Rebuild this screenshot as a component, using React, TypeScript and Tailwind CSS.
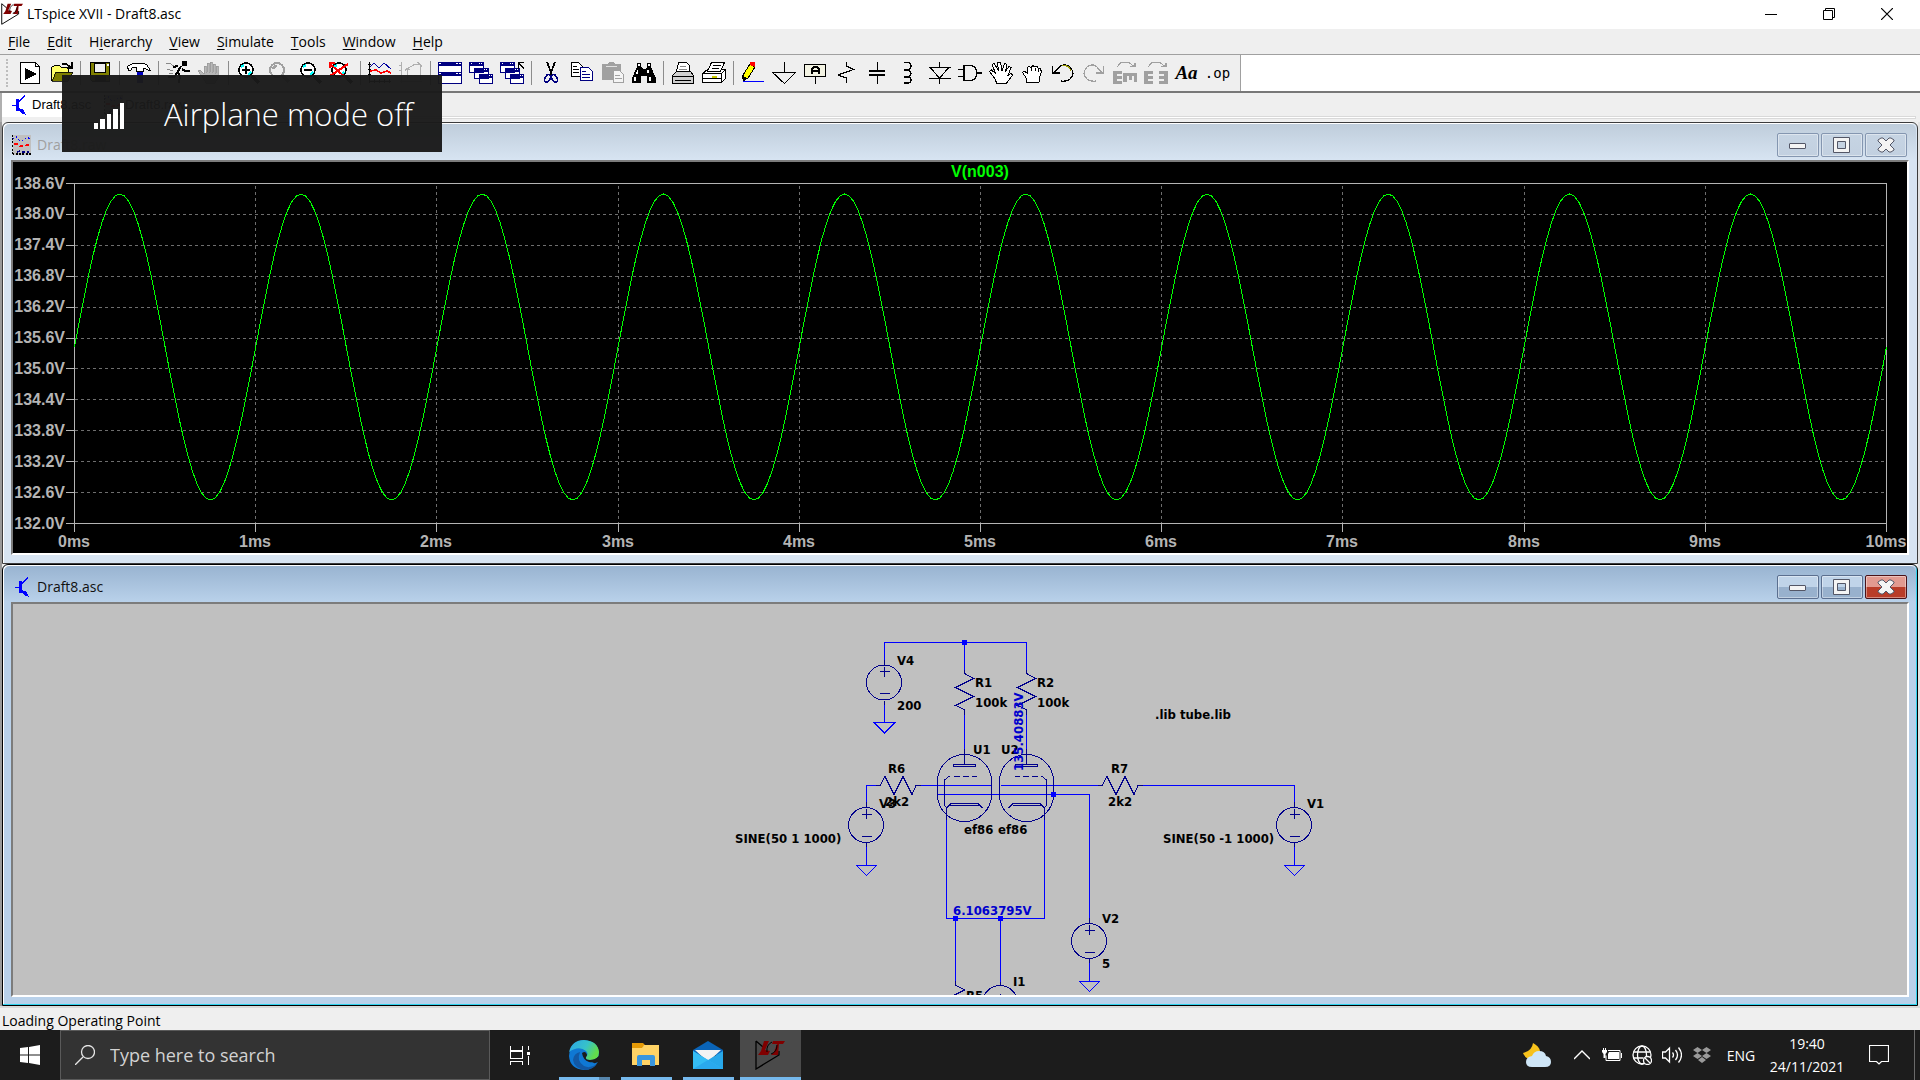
import type { ReactNode } from 'react';

const UI_FONT = "font-['Open_Sans','Noto_Sans',sans-serif]";

/* ------------------------------------------------------------------ */
/* Shared glyphs                                                       */
/* ------------------------------------------------------------------ */

function LtLogo({ className }: { className: string }) {
  return (
    <svg aria-hidden="true" className={className} viewBox="0 0 30 30">
      <path d="M1 1v28l23-14V11M1 1l7 6" fill="none" stroke="#000" strokeWidth="1.300" />
      <path d="M9 1h5l-4 9 5 1-2 4H3l3-4zM18 1h12l-2 3h-4l-1 11h-7l3-3 3-8h-5z" fill="#800000" />
      <path d="M12 12q-1-7 5-10M16 14q6-2 6-9" fill="none" stroke="#000" strokeWidth="1" />
    </svg>
  );
}

function TransistorIcon() {
  return (
    <svg aria-hidden="true" className="size-5" shapeRendering="crispEdges" viewBox="0 0 20 20">
      <path d="M4 10.500h4" stroke="#00f" strokeWidth="1" />
      <path d="M8 4h3v12H8z" fill="#00f" />
      <path d="M10 7l7-6M10 13l6 6" fill="none" stroke="#00f" strokeWidth="1.500" />
      <path d="M13 14h2l3 6-5-2z" fill="#00f" />
    </svg>
  );
}

function WaveIcon() {
  return (
    <svg aria-hidden="true" className="size-5" shapeRendering="crispEdges" viewBox="0 0 20 20">
      <path d="M2 0h18v20H2z" fill="#c0c0c0" />
      <path d="M1 1h1M1 4h1M1 7h1M1 11h1M1 15h1M1 18h1M2 19h1M6 18v2M9 18v2M12 18v2M16 18v2M19 18v2" stroke="#000" strokeWidth="1.500" />
      <path d="M2 4l3-3 3 4 4 1 4-4 4 3" fill="none" stroke="#00f" strokeDasharray="2 2" />
      <path d="M3 9h3l3 2h5l2-1h4" fill="none" stroke="#f00" strokeDasharray="4 2" strokeWidth="1.500" />
      <path d="M6 17l3-1 3 1h6" fill="none" stroke="#000080" strokeDasharray="3 2" strokeWidth="1.500" />
    </svg>
  );
}

/* ------------------------------------------------------------------ */
/* Toolbar                                                             */
/* ------------------------------------------------------------------ */

type Tool = { label: string; icon: ReactNode };

const magnifier = (
  <>
    <circle cx="10" cy="9" fill="#fff" r="7" stroke="#000" strokeWidth="1.600" />
    <path d="M5 6l3-2M12 14l3-3" stroke="#0ff" strokeWidth="2" />
    <path d="M16 15l7 7" stroke="#000" strokeWidth="3" />
  </>
);

const cascade = (
  <>
    <path d="M.5 1.500h14v10H.5zM5.500 7.500h14v10h-14zM10.500 13.500h13v9h-13z" fill="#fff" stroke="#000080" />
    <path d="M0 1h15v4H0zM5 7h15v4H5zM10 13h14v4H10z" fill="#000080" />
    <path d="M2 2h1v1H2zM10 2h1v1h-1zM12 2h1v1h-1zM15 8h1v1h-1zM17 8h1v1h-1zM20 14h1v1h-1zM22 14h1v1h-1z" fill="#fff" />
  </>
);

const toolGroups: Tool[][] = [
  [
    {
      label: 'New schematic',
      icon: (
        <>
          <path d="M2.500 1.500h15l4 4v17h-19z" fill="#fff" stroke="#000" />
          <path d="M17.500 1.500v4h4" fill="none" stroke="#000" />
          <path d="M7 7l12 6-12 6z" fill="#000" />
        </>
      ),
    },
    {
      label: 'Open',
      icon: (
        <>
          <path d="M2.500 19.500v-13l3-2h5l2 2h7v4" fill="#ff6" stroke="#000" />
          <path d="M3 20l4-9h17l-5 9z" fill="#808000" stroke="#000" strokeWidth=".8" />
          <path d="M13 3h4l3 2 2 1M23 1v6h-5" fill="none" stroke="#000" strokeWidth="1.500" />
        </>
      ),
    },
  ],
  [
    {
      label: 'Save',
      icon: (
        <>
          <path d="M2.500 1.500h19v19h-17l-2-2z" fill="#808000" stroke="#000" />
          <path d="M6.500 2h11v9h-11z" fill="#efefef" stroke="#000" />
          <path d="M7 14h11v6H7z" fill="#000" />
          <path d="M18.500 3h2v2h-2z" fill="#fff" />
        </>
      ),
    },
  ],
  [
    {
      label: 'Control panel',
      icon: (
        <>
          <path d="M9.500 11h6v11h-6z" fill="#0000c0" />
          <path d="M.5 5.500l5-3h11l3 1 4 6h-2l-3-2h-2v3h-7v-4h-4l-2 3h-2z" fill="#fff" stroke="#000" />
        </>
      ),
    },
  ],
  [
    {
      label: 'Run',
      icon: (
        <>
          <path d="M16 0h5v5h-5z" fill="#000" />
          <path d="M15 5l-4 7M12 5l-5 1M16 8l3 2h5M12 11l2 4-1 7M11 12l-3 4H2" fill="none" stroke="#000" strokeWidth="2" />
          <path d="M0 3l3-1 5 3M1 8l6 2M3 12h4" fill="none" stroke="#888" />
        </>
      ),
    },
    {
      label: 'Halt',
      icon: (
        <path
          d="M5 15l-4-5 2-1 4 4V5h2v6h1V2h2v9h1V1h2v10h1V3h2v9h1V5h2v12l-3 5H9z"
          fill="#b8b8b8"
          stroke="#999"
          strokeWidth=".8"
        />
      ),
    },
  ],
  [
    { label: 'Zoom in', icon: <>{magnifier}<path d="M6 9h8M10 5v8" stroke="#000" strokeWidth="2" /></> },
    {
      label: 'Pan',
      icon: (
        <>
          <circle cx="10" cy="9" fill="none" r="7" stroke="#a0a0a0" strokeWidth="2" />
          <path d="M6 8l3-4M15 14l7 7" stroke="#a0a0a0" strokeWidth="3" />
        </>
      ),
    },
    { label: 'Zoom out', icon: <>{magnifier}<path d="M6 9h8" stroke="#000" strokeWidth="2" /></> },
    { label: 'Zoom fit', icon: <>{magnifier}<path d="M0 2l17 15M19 3L1 15M1 2v5M1 2h5" fill="none" stroke="#f00" strokeWidth="2" /></> },
  ],
  [
    {
      label: 'Autorange',
      icon: (
        <>
          <path d="M1.500 1v21M0 3.500h3M0 8.500h3M0 13.500h3M1 20.500h22M6 18v4M11 18v4M16 18v4M21 18v4" fill="none" stroke="#000" />
          <path d="M2 6l4-4 5 5 5-5 7 6" fill="none" stroke="#0000a0" />
          <path d="M2 10l6-1 5 3 6-2 4 2" fill="none" stroke="#f00" strokeWidth="1.500" />
        </>
      ),
    },
    {
      label: 'Toggle axis',
      icon: (
        <path
          d="M2.500 1v21M0 4.500h3M0 9.500h3M0 14.500h3M1 20.500h22M8 18V8l8-5h5v16M6 10l2-3 3 2M18 1l3 2 2 3M10 14h3M15 14h3"
          fill="none"
          stroke="#b0b0b0"
        />
      ),
    },
  ],
  [
    {
      label: 'Tile windows',
      icon: (
        <>
          <path d="M.5 1.500h23v21H.5z" fill="#fff" stroke="#000080" />
          <path d="M0 1h24v4H0zM0 11h24v4H0z" fill="#000080" />
          <path d="M1 2h2v1H1zM18 2h2v1h-2zM21 2h2v1h-2zM1 12h2v1H1zM18 12h2v1h-2zM21 12h2v1h-2z" fill="#fff" />
        </>
      ),
    },
    { label: 'Cascade windows', icon: cascade },
    { label: 'Close all', icon: <>{cascade}<path d="M24 8l-5-6M18.500 8V1.500H24" fill="none" stroke="#000" strokeWidth="1.500" /></> },
  ],
  [
    {
      label: 'Cut',
      icon: (
        <>
          <path d="M8 1l5 13M16 1l-5 13" stroke="#000" strokeWidth="1.800" />
          <ellipse cx="8.500" cy="17.500" fill="none" rx="2.500" ry="4" stroke="#000080" strokeWidth="1.600" transform="rotate(25 8.500 17.500)" />
          <ellipse cx="15.500" cy="17.500" fill="none" rx="2.500" ry="4" stroke="#000080" strokeWidth="1.600" transform="rotate(-25 15.500 17.500)" />
        </>
      ),
    },
    {
      label: 'Copy',
      icon: (
        <>
          <path d="M1.500 1.500h7l4 4v10h-11z" fill="#fff" stroke="#000" />
          <path d="M3 5.500h4M3 8.500h6M3 11.500h6" stroke="#000" />
          <path d="M10.500 6.500h8l4 4v9h-12z" fill="#fff" stroke="#000080" />
          <path d="M12 10.500h4M12 13.500h8M12 16.500h8" stroke="#000080" />
        </>
      ),
    },
    {
      label: 'Paste',
      icon: (
        <>
          <path d="M1 3h6l1-2h5l1 2h6v16H1z" fill="#a0a0a0" />
          <path d="M5 5.500h11" stroke="#e0e0e0" />
          <path d="M12.500 9.500h6l4 4v8h-10z" fill="#f4f4f4" stroke="#a0a0a0" />
          <path d="M14 14.500h5M14 17.500h7" stroke="#a0a0a0" />
        </>
      ),
    },
    {
      label: 'Find',
      icon: (
        <>
          <path d="M5 2h4v4l2 2h2l2-2V2h4v4l5 11v5h-9v-7h-6v7H0v-5L5 6z" fill="#000" />
          <path d="M6 3h2v2H6zM16 3h2v2h-2zM5 9h1v4H4zM15 9h2v3h-2zM2 16h2v4H2zM17 16h2v4h-2z" fill="#fff" />
        </>
      ),
    },
  ],
  [
    {
      label: 'Print',
      icon: (
        <>
          <path d="M5.500 10.500l2-9h8l3 3v6" fill="#fff" stroke="#000" />
          <path d="M1.500 14.500l4-4h14l3 4v8h-21z" fill="#d0d0d0" stroke="#000" />
          <path d="M2 15.500h20M4 19.500h16" stroke="#000" />
          <path d="M9 5.500h6M8 8.500h8" stroke="#888" />
        </>
      ),
    },
    {
      label: 'Print preview',
      icon: (
        <>
          <path d="M.5 12.500l5-4h18l-4 4zM.5 12.500h19v9H.5zM19.500 12.500l4-4v9l-4 4z" fill="#fff" stroke="#000" />
          <path d="M5.500 10l4-8.500h13l-4 8.500z" fill="#fff" stroke="#000" />
          <path d="M11 4.500h8M10 7.500h7M1 17.500h18" stroke="#000" />
          <path d="M10 15.500h5" stroke="#cc0" strokeWidth="2" />
        </>
      ),
    },
  ],
  [
    {
      label: 'Wire',
      icon: (
        <>
          <path d="M2 19V14L9 3l5 3-7 11z" fill="#ff0" stroke="#000" />
          <path d="M9 1h5v5l-5-2z" fill="#f00" />
          <path d="M1 14l5 3-4 4z" fill="#000" />
          <path d="M2 20.500h21" stroke="#00f" />
        </>
      ),
    },
    { label: 'Ground', icon: <path d="M12.500 1v10.500M.5 11.500h23l-11 11z" fill="none" stroke="#000" strokeWidth="1.200" /> },
    {
      label: 'Label net',
      icon: (
        <>
          <rect fill="#f4f4e4" height="12" rx="1" stroke="#000" strokeWidth="1.500" width="21" x="1.500" y="3.500" />
          <path d="M12.500 16v7" stroke="#000" />
          <path d="M9 13V8l2-2h3l2 2v5M9 10h6" fill="none" stroke="#000" strokeWidth="1.500" />
        </>
      ),
    },
    { label: 'Resistor', icon: <path d="M12.500 1v4l7 3.500L4 14l8.500 3v5" fill="none" stroke="#000" strokeWidth="1.200" /> },
    { label: 'Capacitor', icon: <><path d="M12.500 1v8M12.500 15v8" stroke="#000" /><path d="M4 10h16M4 14h16" stroke="#000" strokeWidth="2" /></> },
    { label: 'Inductor', icon: <path d="M8 1.500h3q4 0 4 3.500t-4 4q4 1 4 3.500t-4 3.500q4 0 4 3t-4 3H8M8 9h3M8 16h3" fill="none" stroke="#000" strokeWidth="1.400" /> },
    { label: 'Diode', icon: <path d="M12.500 1v5M12.500 17v6M2 6.500h22M2 17.500h22M3 6.500L12.500 17 22 6.500" fill="none" stroke="#000" strokeWidth="1.200" /> },
    { label: 'Component', icon: <path d="M0 8.500h6M0 15.500h6M6 4.500h6q6 0 7 7.500-1 7.500-7 7.500H6zM19 12h5" fill="none" stroke="#000" strokeWidth="1.300" /> },
    {
      label: 'Move',
      icon: (
        <path
          d="M7.500 22.500l-1-4-6-8 2-1.500 4.500 4-4-9 2-1.500 4.500 7-1-8h3l1.500 8 2.500-7 2.500 1-1.500 7 3.500-5 2 1-3 8 3-2 1.500 1.500-5 7-2 2z"
          fill="#fff"
          stroke="#000"
        />
      ),
    },
    {
      label: 'Drag',
      icon: (
        <path
          d="M6.500 21.500v-4l-4-6 1.500-1.500 3 2V7l2-1.500 2 1 2-2 2 1.500 2-.500 1.500 2 2 .5 1 3-2 5v5zM11.500 7v3M15 7v3M18 8v3"
          fill="#fff"
          stroke="#000"
        />
      ),
    },
    { label: 'Undo', icon: <><path d="M6 8q7-7 13-2 6 7 0 12-4 3-9 2" fill="none" stroke="#000" strokeWidth="1.300" /><path d="M11 4.500q6-1 9 5" fill="none" stroke="#990" strokeWidth="1.300" /><path d="M1.500 5v7H9M2 12l6-5" fill="none" stroke="#000" strokeWidth="1.600" /></> },
    { label: 'Redo', icon: <><path d="M17 8Q11 1 5 6q-6 7 0 12 4 3 9 2" fill="none" stroke="#a0a0a0" strokeWidth="1.300" /><path d="M21.500 5v7H14M21 12l-6-5" fill="none" stroke="#a0a0a0" strokeWidth="1.600" /></> },
    { label: 'Rotate', icon: <><path d="M4 6l4-4.500h8l5 4M17 5.500h5v-4" fill="none" stroke="#a0a0a0" strokeWidth="1.200" /><path d="M0 10h9v3H4v2h5v3H4v2h5v3H0zM10 12h14v9h-3v-6h-2v4h-3v-4h-2v6h-4z" fill="#a0a0a0" /></> },
    { label: 'Mirror', icon: <><path d="M4 6l4-4.500h8l5 4M17 5.500h5v-4" fill="none" stroke="#a0a0a0" strokeWidth="1.200" /><path d="M0 10h9v3H4v2h5v3H4v2h5v3H0zM24 10h-9v3h5v2h-5v3h5v2h-5v3h9z" fill="#a0a0a0" /></> },
  ],
];

function Toolbar() {
  return (
    <div className="flex h-[38px] border-b-2 border-[#787878] bg-white">
      <div className="flex items-center border-r border-[#a0a0a0] bg-[#efefef] pr-[7px]">
        <span className="mr-[5px] ml-[6px] h-7 w-[3px] border-l-2 border-dotted border-[#bdbdbd]" />
        {toolGroups.map((group, index) => (
          <div className="flex items-center" key={group[0].label}>
            {index > 0 && <span className="mx-[3px] h-6 w-[2px] border-r border-[#8c8c8c]" />}
            {group.map((tool) => (
              <button aria-label={tool.label} className="flex h-8 w-[31px] items-center justify-center" key={tool.label} type="button">
                <svg aria-hidden="true" className="size-6" shapeRendering="crispEdges" viewBox="0 0 24 24">
                  {tool.icon}
                </svg>
              </button>
            ))}
          </div>
        ))}
        <button className="h-8 w-[31px] font-['Liberation_Serif',serif] text-[19px] leading-8 font-bold text-black italic" type="button">
          Aa
        </button>
        <button className="h-8 w-[31px] font-['DejaVu_Sans_Mono',monospace] text-[14px] leading-6 text-black" type="button">
          .op
        </button>
      </div>
    </div>
  );
}

/* ------------------------------------------------------------------ */
/* Main window header                                                  */
/* ------------------------------------------------------------------ */

const menus = [
  ['', 'F', 'ile'],
  ['', 'E', 'dit'],
  ['H', 'i', 'erarchy'],
  ['', 'V', 'iew'],
  ['', 'S', 'imulate'],
  ['', 'T', 'ools'],
  ['', 'W', 'indow'],
  ['', 'H', 'elp'],
];

function TitleBar() {
  return (
    <header className="flex h-[29px] items-center bg-white pb-px pl-[1px]">
      <LtLogo className="size-[22px]" />
      <h1 className="ml-1 flex-1 text-[14px] leading-5 text-black">LTspice XVII - Draft8.asc</h1>
      <button aria-label="Minimize" className="flex h-full w-[58px] items-center justify-center" type="button">
        <span className="h-px w-3 bg-black" />
      </button>
      <button aria-label="Restore" className="flex h-full w-[58px] items-center justify-center" type="button">
        <svg aria-hidden="true" className="size-3" viewBox="0 0 12 12">
          <path d="M.5 2.500h9v9h-9zM2.500 2.500v-2h9v9h-2" fill="none" stroke="#000" />
        </svg>
      </button>
      <button aria-label="Close" className="mr-1 flex h-full w-[58px] items-center justify-center" type="button">
        <svg aria-hidden="true" className="size-3" viewBox="0 0 12 12">
          <path d="M0 0l12 12M12 0L0 12" stroke="#000" strokeWidth="1.200" />
        </svg>
      </button>
    </header>
  );
}

function MenuBar() {
  return (
    <nav className="flex h-[26px] items-center gap-[17px] border-b border-[#a0a0a0] bg-[#efefef] pl-2">
      {menus.map(([before, key, after]) => (
        <button className="text-[14px] leading-5 text-black" key={before + key + after} type="button">
          {before}
          <span className="underline underline-offset-2">{key}</span>
          {after}
        </button>
      ))}
    </nav>
  );
}

function TabBar() {
  return (
    <div className="flex h-[29px] items-start border-l-2 border-[#b0b0b0] bg-[#efefef] pb-1" role="tablist">
      <button
        aria-selected="true"
        className="flex h-6 w-[97px] items-center gap-1 bg-white pl-[6px] font-['Liberation_Sans',sans-serif] text-[13px] leading-5 text-black"
        role="tab"
        type="button"
      >
        <TransistorIcon />
        Draft8.asc
      </button>
      <button
        aria-selected="false"
        className="flex h-6 items-center gap-[2px] pl-1 font-['Liberation_Sans',sans-serif] text-[13px] leading-5 text-black"
        role="tab"
        type="button"
      >
        <WaveIcon />
        Draft8.raw
      </button>
      <span className="mt-[23px] mr-1 h-[3px] flex-1 border border-[#d9d9d9] bg-white" />
    </div>
  );
}

/* ------------------------------------------------------------------ */
/* Child windows                                                       */
/* ------------------------------------------------------------------ */

type ChildWindowProps = { title: string; icon: ReactNode; active?: boolean; children: ReactNode };

function ChildWindow({ title, icon, active, children }: ChildWindowProps) {
  const button = active
    ? 'border-[#5b6f8f] from-[#c0d4e9] from-50% to-[#98b1cd] to-50%'
    : 'border-[#8496b0] from-[#c6d4e3] to-[#c2d0e0]';
  const close = active ? 'border-[#4a1218] from-[#e29a90] from-50% to-[#b93c28] to-50%' : button;
  const base = 'flex h-6 w-[42px] items-center justify-center rounded-xs border bg-linear-to-b inset-ring inset-ring-white/40';

  return (
    <section
      className={`flex min-h-0 flex-1 flex-col rounded-t-md border px-2 pb-2 ${
        active
          ? 'border-black bg-[#b9d1ea] shadow-[inset_-1px_-1px_0_#2fd3ee,inset_1px_1px_0_#fff]'
          : 'border-[#3c3c3c] bg-[#d7e4f2] shadow-[inset_1px_1px_0_#fff]'
      }`}
    >
      <header
        className={`mt-px -mx-[7px] flex h-9 shrink-0 items-center rounded-t-md bg-linear-to-b pt-[6px] pl-[7px] ${
          active ? 'from-[#99b4d1] to-[#b9d1ea]' : 'from-[#bfcddb] to-[#d7e4f2]'
        }`}
      >
        {icon}
        <h2 className={`ml-[6px] flex-1 text-[14px] leading-5 ${active ? 'text-[#101010]' : 'text-[#a0a0a0]'}`}>{title}</h2>
        <div className="mr-[9px] flex gap-[2px]">
          <button aria-label="Minimize" className={`${base} ${button}`} type="button">
            <span className="mt-[2px] mr-px h-[6px] w-[17px] rounded-[1px] border border-[#535666] bg-[#f4f4f4]" />
          </button>
          <button aria-label="Maximize" className={`${base} ${button}`} type="button">
            <svg aria-hidden="true" className="mr-px h-4 w-[17px]" viewBox="0 0 17 16">
              <path d="M.5.5h16v15H.5zM4.500 4.500v7h8v-7z" fill="#f4f4f4" fillRule="evenodd" stroke="#535666" />
            </svg>
          </button>
          <button aria-label="Close" className={`${base} ${close}`} type="button">
            <svg aria-hidden="true" className="h-4 w-[18px]" viewBox="0 0 18 16">
              <path
                d="M1 3l3-2h2l3 3 3-3h2l3 2v1l-4 4 4 4v1l-3 2h-2l-3-3-3 3H4l-3-2v-1l4-4-4-4z"
                fill="#f4f4f4"
                stroke="#535666"
              />
            </svg>
          </button>
        </div>
      </header>
      <div className="min-h-0 flex-1 border-2 border-t-[#7c7c7c] border-r-white border-b-white border-l-[#7c7c7c]">{children}</div>
    </section>
  );
}

/* ------------------------------------------------------------------ */
/* Waveform plot                                                       */
/* ------------------------------------------------------------------ */

const PLOT = { left: 61.5, top: 21.5, width: 1812, height: 340 };
const voltages = ['138.6V', '138.0V', '137.4V', '136.8V', '136.2V', '135.6V', '135.0V', '134.4V', '133.8V', '133.2V', '132.6V', '132.0V'];
const times = Array.from({ length: 11 }, (_, i) => `${i}ms`);

const trace = Array.from({ length: 401 }, (_, i) => {
  const x = PLOT.left + (i / 400) * PLOT.width;
  const y = 185 - 153 * Math.sin((i / 40) * 2 * Math.PI);
  return `${x.toFixed(1)},${y.toFixed(1)}`;
}).join(' ');

function WaveformPlot() {
  const right = PLOT.left + PLOT.width;
  const bottom = PLOT.top + PLOT.height;

  return (
    <svg
      aria-label="V(n003) over time"
      className="size-full bg-black font-['Liberation_Sans',sans-serif] text-[16px] font-bold"
      role="img"
      viewBox="0 0 1894 391"
    >
      <g shapeRendering="crispEdges" stroke="#6e6e6e" strokeDasharray="3 3">
        {voltages.slice(1, -1).map((v, i) => {
          const y = Math.floor(PLOT.top + ((i + 1) * PLOT.height) / 11) + 0.5;
          return <path d={`M${PLOT.left} ${y}H${right}`} key={v} />;
        })}
        {times.slice(1, -1).map((t, i) => {
          const x = Math.floor(PLOT.left + ((i + 1) * PLOT.width) / 10) + 0.5;
          return <path d={`M${x} ${PLOT.top + 2}V${bottom}`} key={t} />;
        })}
      </g>
      <g fill="none" shapeRendering="crispEdges" stroke="#b4b4b4">
        <rect height={PLOT.height} width={PLOT.width} x={PLOT.left} y={PLOT.top} />
        {voltages.map((v, i) => {
          const y = Math.floor(PLOT.top + (i * PLOT.height) / 11) + 0.5;
          return <path d={`M53 ${y}h8`} key={v} />;
        })}
        {times.map((t, i) => {
          const x = Math.floor(PLOT.left + (i * PLOT.width) / 10) + 0.5;
          return <path d={`M${x} ${bottom}v8`} key={t} />;
        })}
      </g>
      <g fill="#b4b4b4">
        {voltages.map((v, i) => (
          <text key={v} textAnchor="end" x="52" y={Math.round(PLOT.top + (i * PLOT.height) / 11 + 5)}>
            {v}
          </text>
        ))}
        {times.map((t, i) => (
          <text key={t} textAnchor="middle" x={Math.floor(PLOT.left + (i * PLOT.width) / 10)} y="385">
            {t}
          </text>
        ))}
      </g>
      <text fill="#00ff00" textAnchor="middle" x="967" y="15">
        V(n003)
      </text>
      <polyline fill="none" points={trace} shapeRendering="crispEdges" stroke="#00ff00" />
    </svg>
  );
}

/* ------------------------------------------------------------------ */
/* Schematic                                                           */
/* ------------------------------------------------------------------ */

function Source({ x, y }: { x: number; y: number }) {
  return (
    <g transform={`translate(${x} ${y})`}>
      <path d="M0 -23V-18M0 18v5M-5 -11H5M0 -16V-6M-5 11H5" />
      <circle cx="-0.5" cy="0" r="17.500" />
      <path d="M0 22V40M-10.500 40h21L0 50.500z" stroke="#0000ff" />
    </g>
  );
}

function Resistor({ x, y, horizontal }: { x: number; y: number; horizontal?: boolean }) {
  return <path d="M0 -4V0L9 5l-18 9 18 9-18 9L0 36v5" transform={`translate(${x} ${y})${horizontal ? ' rotate(-90)' : ''}`} />;
}

function Tube({ x, flip }: { x: number; flip?: boolean }) {
  return (
    <g transform={`translate(${x} 0)${flip ? ' scale(-1 1)' : ''}`}>
      <rect height="67" rx="27" width="54" x="-27" y="150.500" />
      <path d="M0 145V161M-11 160.500h22v2h-22z" />
      <path d="M-11 172.500h23" strokeDasharray="6 3" />
      <path d="M-15 172l-5 4v25l2 3v12M-18 204l5-5h26l5 5M-15 201.500h29" />
    </g>
  );
}

const wires = [
  'M871.500 56V38.500H1013.500V66',
  'M951.500 38.500V66M951.500 110v36M1013.500 110v36',
  'M853.500 199V181.500H864M906 181.500H978.500M987.500 181.500H1089M1125 181.500H1281.500V199',
  'M924.500 190.500H1076.500V314',
  'M933.500 204V314.500H1031.500V204',
  'M942.500 314.500V377M987.500 314.500V378',
];

const junctions = [
  [951.5, 38.5],
  [1040.5, 190.5],
  [942.5, 314.5],
  [987.5, 314.5],
];

const labels: [string, number, number][] = [
  ['V4', 884, 61],
  ['200', 884, 106],
  ['R1', 962, 83],
  ['100k', 962, 103],
  ['R2', 1024, 83],
  ['100k', 1024, 103],
  ['U1', 960, 150],
  ['U2', 988, 150],
  ['R6', 875, 169],
  ['2k2', 872, 202],
  ['V3', 866, 204],
  ['SINE(50 1 1000)', 722, 239],
  ['ef86', 951, 230],
  ['ef86', 985, 230],
  ['.lib tube.lib', 1142, 115],
  ['R7', 1098, 169],
  ['2k2', 1095, 202],
  ['V1', 1294, 204],
  ['SINE(50 -1 1000)', 1150, 239],
  ['V2', 1089, 319],
  ['5', 1089, 364],
  ['R5', 953, 396],
  ['I1', 1000, 382],
];

function Schematic() {
  return (
    <svg
      aria-label="Draft8 schematic"
      className="size-full bg-[#c0c0c0] font-['DejaVu_Sans_Condensed','Noto_Sans',sans-serif] text-[13px] font-bold"
      role="img"
      viewBox="0 0 1894 391"
    >
      <g fill="none" shapeRendering="crispEdges" stroke="#00008b">
        <path d={wires.join('')} stroke="#0000ff" />
        <Source x={871.5} y={78.5} />
        <Source x={853.5} y={221} />
        <Source x={1281.5} y={221} />
        <Source x={1076.5} y={337} />
        <Resistor x={951.5} y={69.5} />
        <Resistor x={1013.5} y={69.5} />
        <Resistor horizontal x={867} y={181.5} />
        <Resistor horizontal x={1089} y={181.5} />
        <Tube x={951.5} />
        <Tube flip x={1013.5} />
        <path d="M942.500 377v4l9 5-18 9M987.500 378v4M987.500 390v2" />
        <circle cx="987" cy="399" r="17.500" />
      </g>
      <g fill="#0000ff">
        {junctions.map(([x, y]) => (
          <rect height="5" key={`${x}-${y}`} width="5" x={x - 2.5} y={y - 2.5} />
        ))}
      </g>
      {labels.map(([text, x, y]) => (
        <text key={`${text}-${x}`} x={x} y={y}>
          {text}
        </text>
      ))}
      <g fill="#0000cd">
        <text x="940" y="311">
          6.1063795V
        </text>
        <text transform="translate(1010 167) rotate(-90)">135.40883V</text>
      </g>
    </svg>
  );
}

/* ------------------------------------------------------------------ */
/* Overlay and taskbar                                                 */
/* ------------------------------------------------------------------ */

function AirplaneToast() {
  return (
    <div className="absolute top-[75px] left-[62px] flex h-[77px] w-[380px] items-center bg-[#1a1a1a]/97 pl-8 text-white" role="status">
      <svg aria-hidden="true" className="mt-1 h-[26px] w-[31px]" viewBox="0 0 31 26">
        <path d="M0 20h4v6H0zM6 16h5v10H6zM13 11h4v15h-4zM19 6h5v20h-5zM26 0h4v26h-4z" fill="#fff" />
      </svg>
      <span className="ml-[39px] text-[31px] leading-10 font-light">Airplane mode off</span>
    </div>
  );
}

const taskApps = [
  {
    label: 'Microsoft Edge',
    icon: (
      <>
        <defs>
          <linearGradient id="edgeTop" x1="0" x2="1" y1="0" y2="0.400">
            <stop offset="0" stopColor="#2aa5e8" />
            <stop offset="0.600" stopColor="#37c2c9" />
            <stop offset="1" stopColor="#62dc4a" />
          </linearGradient>
        </defs>
        <path d="M15 0Q29 1 30 13q0 7-9 7 3 5 8 2-5 8-14 8Q1 29 0 16 1 1 15 0z" fill="#0f78d4" />
        <path d="M0 12Q3 0 15 0q14 1 15 12 0 8-9 8-5 0-4-3 3-3 0-6Q10 5 0 12z" fill="url(#edgeTop)" />
        <path d="M11 12q-4 9 4 14 6 3 13-2-5 6-12 6Q5 28 4 20q1-7 7-8z" fill="#1258a4" />
        <path d="M13 13q3-2 4 0 2 2 0 4-1 3 4 3 5 0 8-3v3q-4 3-9 2-6-2-7-9z" fill="#1c1c1c" />
      </>
    ),
  },
  {
    label: 'File Explorer',
    icon: (
      <>
        <path d="M1 3h11l3 3h-3v3H1z" fill="#e59a06" />
        <path d="M1 8h10l2-3h15v20H1z" fill="#ffd365" />
        <path d="M6 26V17q0-2 2-2h14q2 0 2 2v9h-5v-6h-8v6z" fill="#3a96dd" />
      </>
    ),
  },
  {
    label: 'Mail',
    icon: (
      <>
        <path d="M0 10L15 1l15 9v5H0z" fill="#0a64b8" />
        <path d="M2 10h26L15 22z" fill="#f3f3f3" />
        <path d="M0 11l15 9 15-9v18H0z" fill="#28a8ea" />
        <path d="M0 11l15 9L30 29H0z" fill="#35bdf5" />
        <path d="M0 29l15-9 15 9z" fill="#2aa9ee" />
      </>
    ),
  },
];

function Tray() {
  return (
    <div className="flex h-full items-center text-white">
      <button aria-label="Weather" className="mr-[10px] flex h-full w-10 items-center justify-center" type="button">
        <svg aria-hidden="true" className="size-7" viewBox="0 0 28 28">
          <path d="M10 2q-1 8-10 10 2 6 9 6 8-1 8-8-1-5-7-8z" fill="#f7c21c" />
          <path d="M9 26q-6 0-6-5t6-6q2-5 7-5 6 0 7 5 5 1 5 6t-6 5z" fill="#cfe6f7" />
        </svg>
      </button>
      <button aria-label="Show hidden icons" className="flex h-full w-[30px] items-center justify-center" type="button">
        <svg aria-hidden="true" className="size-4" viewBox="0 0 16 16">
          <path d="M0 12l8-8 8 8" fill="none" stroke="#fff" strokeWidth="1.400" />
        </svg>
      </button>
      <button aria-label="Battery" className="flex h-full w-[30px] items-center justify-center" type="button">
        <svg aria-hidden="true" className="size-5" viewBox="0 0 20 20">
          <path d="M6 5.500h12v10H4v-5M19.500 8v5" fill="none" stroke="#fff" />
          <path d="M7 7h10v7H6V9z" fill="#fff" />
          <path d="M1.500 3v2M3.500 3v2" fill="none" stroke="#fff" />
          <path d="M0 5h5v2L3.500 9V13h-2V9L0 7z" fill="#fff" />
        </svg>
      </button>
      <button aria-label="Network" className="flex h-full w-[30px] items-center justify-center" type="button">
        <svg aria-hidden="true" className="size-5" fill="none" stroke="#fff" strokeWidth="1.300" viewBox="0 0 20 20">
          <circle cx="10" cy="10" r="9" />
          <ellipse cx="10" cy="10" rx="4.500" ry="9" />
          <path d="M1.500 7h17M1.500 13h10" />
          <circle cx="15.500" cy="15.500" fill="#1c1c1c" r="4" />
          <path d="M13 13l5 5" />
        </svg>
      </button>
      <button aria-label="Volume" className="flex h-full w-[30px] items-center justify-center" type="button">
        <svg aria-hidden="true" className="size-5" fill="none" stroke="#fff" strokeWidth="1.300" viewBox="0 0 20 20">
          <path d="M.5 7h3l4-4v14l-4-4h-3zM10.500 7.500q2 2.500 0 5M13.500 5q4 5 0 10M16.500 2.500q6 7.500 0 15" />
        </svg>
      </button>
      <button aria-label="Dropbox" className="flex h-full w-[30px] items-center justify-center" type="button">
        <svg aria-hidden="true" className="h-4 w-[18px]" viewBox="0 0 18 16">
          <path d="M4.500 0L9 3 4.500 6 0 3zM13.500 0L18 3l-4.500 3L9 3zM4.500 6L9 9l-4.500 3L0 9zM13.500 6L18 9l-4.500 3L9 9zM9 10l4 3-4 3-4-3z" fill="#9a9a9a" />
        </svg>
      </button>
      <button className="h-full w-12 text-[14px]" type="button">
        ENG
      </button>
      <button className="flex h-full w-[84px] flex-col items-center justify-center text-[14px] leading-[23px]" type="button">
        <time>19:40</time>
        <time>24/11/2021</time>
      </button>
      <button aria-label="Notifications" className="mr-[5px] flex h-full w-[60px] items-center justify-center" type="button">
        <svg aria-hidden="true" className="size-5" viewBox="0 0 20 20">
          <path d="M.5.500h19v16h-7L10 19l-2.500-2.500h-7z" fill="none" stroke="#fff" strokeWidth="1.200" />
        </svg>
      </button>
      <button aria-label="Show desktop" className="h-full w-[6px] border-l border-[#6a6a6a]" type="button" />
    </div>
  );
}

function Taskbar() {
  return (
    <footer className="flex h-[50px] shrink-0 items-center bg-[#1c1c1c]">
      <button aria-label="Start" className="flex h-full w-[60px] items-center justify-center" type="button">
        <svg aria-hidden="true" className="size-5" viewBox="0 0 20 20">
          <path d="M0 3l8-1v7.500H0zM9 2l11-2v9.500H9zM0 10.500h8V18l-8-1zM9 10.500h11V20L9 18z" fill="#fff" />
        </svg>
      </button>
      <label className="flex h-full w-[430px] items-center border border-[#5a5a5a] bg-[#333] pl-[14px]">
        <svg aria-hidden="true" className="size-5" viewBox="0 0 20 20">
          <circle cx="13" cy="7" fill="none" r="6.500" stroke="#e6e6e6" strokeWidth="1.300" />
          <path d="M8 12l-8 8" stroke="#e6e6e6" strokeWidth="1.300" />
        </svg>
        <input
          aria-label="Search"
          className="ml-[15px] min-w-0 flex-1 bg-transparent text-[18px] text-white outline-none placeholder:text-[#d2d2d2]"
          placeholder="Type here to search"
          type="text"
        />
      </label>
      <button aria-label="Task view" className="mr-1 flex h-full w-[60px] items-center justify-center" type="button">
        <svg aria-hidden="true" className="size-5" fill="none" shapeRendering="crispEdges" stroke="#fff" viewBox="0 0 20 20">
          <path d="M.5 1v4h12V1M.5 20v-4h12v4M.5 6.500h12v7H.5zM18.500 1v4M18.500 11v9" />
          <path d="M17 7h3v3h-3z" fill="#fff" stroke="none" />
        </svg>
      </button>
      {taskApps.map((app, index) => (
        <button aria-label={app.label} className="mr-[2px] flex h-full w-[60px] flex-col items-center" key={app.label} type="button">
          <svg aria-hidden="true" className="mt-[10px] size-[30px]" viewBox="0 0 30 30">
            {app.icon}
          </svg>
          <span className={`mt-[7px] h-[3px] w-[51px] bg-[#76b9ed] ${index === 0 ? 'border-r-[11px] border-[#5786ac]' : ''}`} />
        </button>
      ))}
      <button aria-label="LTspice XVII" className="flex h-full w-[61px] flex-col items-center bg-[#4a4a4a]" type="button">
        <LtLogo className="mt-[10px] mr-px size-[30px]" />
        <span className="mt-[7px] h-[3px] w-full bg-[#76b9ed]" />
      </button>
      <div className="flex-1" />
      <Tray />
    </footer>
  );
}

export default function App() {
  return (
    <div className={`relative flex h-screen flex-col overflow-hidden bg-[#efefef] ${UI_FONT}`}>
      <TitleBar />
      <MenuBar />
      <Toolbar />
      <TabBar />
      <main className="flex min-h-0 flex-1 flex-col border-r-2 border-l-2 border-r-[#e3e3e3] border-l-[#9a9a9a]">
        <ChildWindow icon={<WaveIcon />} title="Draft8.raw">
          <WaveformPlot />
        </ChildWindow>
        <ChildWindow active icon={<TransistorIcon />} title="Draft8.asc">
          <Schematic />
        </ChildWindow>
      </main>
      <div className="flex h-6 shrink-0 items-center border-t-2 border-[#d9d9d9] pt-1 pl-[2px] text-[14px] leading-5 text-black" role="status">
        Loading Operating Point
      </div>
      <Taskbar />
      <AirplaneToast />
    </div>
  );
}
